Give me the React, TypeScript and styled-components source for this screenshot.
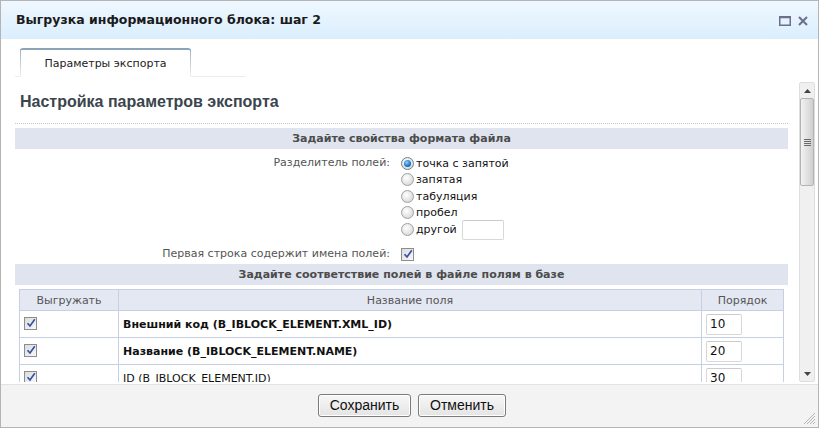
import React from "react";
import styled, { createGlobalStyle, css } from "styled-components";

const Global = createGlobalStyle`
  html, body { margin: 0; padding: 0; overflow: hidden; background: #fff; }
  * { box-sizing: border-box; }
`;

const Window = styled.div`
  width: 819px;
  height: 428px;
  border: 1px solid #b4b4b4;
  display: flex;
  flex-direction: column;
  background: #fff;
  font-family: "DejaVu Sans", Verdana, sans-serif;
`;

const TitleBar = styled.div`
  height: 38px;
  flex: none;
  display: flex;
  align-items: center;
  padding: 0 10px 0 15px;
  background: linear-gradient(#eff8ff, #dbeefd);
`;

const Title = styled.div`
  flex: 1;
  font-weight: bold;
  font-size: 12.5px;
  color: #1a1a1a;
  padding-bottom: 1px;
`;

const TitleIcons = styled.div`
  display: flex;
  gap: 7px;
  align-items: center;
  margin-top: 1px;
`;

const Body = styled.div`
  flex: 1;
  display: flex;
  flex-direction: column;
  padding: 9px 3px 2px 14px;
  min-height: 0;
`;

const TabStrip = styled.div`
  display: flex;
  padding-left: 5px;
  width: 231px;
  border-bottom: 1px solid #ececec;
  flex: none;
`;

const Tab = styled.div`
  width: 171px;
  height: 29px;
  margin-bottom: -1px;
  border-top: 2px solid #8ca2b5;
  border-radius: 3px 3px 0 0;
  background: #fff;
  display: flex;
  align-items: center;
  justify-content: center;
  font-size: 11px;
  color: #222;
  position: relative;
  padding-bottom: 1px;
  &::before, &::after {
    content: "";
    position: absolute;
    top: -1px;
    bottom: 0;
    width: 1px;
    background: linear-gradient(#9cb0c0, #f0f2f4);
  }
  &::before { left: 0; }
  &::after { right: 0; }
`;

const ScrollWrap = styled.div`
  flex: 1;
  display: flex;
  margin-top: 5px;
  min-height: 0;
`;

const Content = styled.div`
  flex: 1;
  overflow: hidden;
  padding-right: 11px;
  min-width: 0;
`;

const Heading = styled.h2`
  margin: 0;
  padding: 11px 0 0 5px;
  height: 42px;
  font-family: "Liberation Sans", Arial, sans-serif;
  font-weight: bold;
  font-size: 16px;
  color: #3a454d;
  border-bottom: 1px dotted #c6c6c6;
`;

const SectionHead = styled.div<{ $mt?: number }>`
  margin-top: ${(p) => p.$mt ?? 4}px;
  height: 21px;
  background: #e0e4ef;
  display: flex;
  align-items: center;
  justify-content: center;
  font-weight: bold;
  font-size: 11px;
  color: #4c4c4c;
`;

const FormGrid = styled.div`
  display: grid;
  grid-template-columns: 386px 1fr;
  padding-top: 6px;
  font-size: 11px;
`;

const Label = styled.div<{ $top?: number }>`
  text-align: right;
  padding-right: 11px;
  color: #555;
  padding-top: ${(p) => p.$top ?? 0}px;
  line-height: 16px;
`;

const Options = styled.div`
  display: flex;
  flex-direction: column;
`;

const Option = styled.label`
  display: flex;
  align-items: center;
  height: 16.5px;
  color: #111;
  gap: 2px;
`;

const Radio = styled.span<{ $on?: boolean }>`
  width: 13px;
  height: 13px;
  border-radius: 50%;
  border: 1px solid #a0a0a0;
  background: radial-gradient(circle at 40% 35%, #fff, #e2e2e2 60%, #cfcfcf);
  display: inline-flex;
  align-items: center;
  justify-content: center;
  flex: none;
  ${(p) =>
    p.$on &&
    css`
      border-color: #6f7f8c;
      &::after {
        content: "";
        width: 7px;
        height: 7px;
        border-radius: 50%;
        background: radial-gradient(circle at 40% 35%, #8fd0ff, #1573c4 60%, #0b4f8f);
      }
    `}
`;

const SmallInput = styled.span<{ $w: number }>`
  display: inline-block;
  width: ${(p) => p.$w}px;
  height: 20px;
  border: 1px solid #d7d7d7;
  border-top-color: #cbcbcb;
  background: #fff;
  border-radius: 2px;
  font-size: 11px;
  line-height: 18px;
  padding-left: 3px;
  color: #111;
  flex: none;
`;

const OtherRow = styled(Option)`
  height: 17px;
`;

const Check = styled.span`
  width: 13px;
  height: 13px;
  border: 1px solid #8d8d8d;
  background: linear-gradient(135deg, #dcdcdc, #f8f8f8);
  display: inline-flex;
  align-items: center;
  justify-content: center;
  flex: none;
`;

const CheckRow = styled.div`
  display: flex;
  align-items: center;
  height: 18px;
  margin-top: 7px;
`;

const Table = styled.table`
  margin: 4px 0 0 4px;
  width: 765px;
  border-collapse: collapse;
  font-size: 11px;
  table-layout: fixed;
`;

const Th = styled.th<{ $w?: number }>`
  ${(p) => p.$w && css`width: ${p.$w}px;`}
  height: 21px;
  background: #e4e8f3;
  border: 1px solid #c7cfe4;
  font-weight: normal;
  color: #555;
  padding: 0;
`;

const Td = styled.td<{ $bold?: boolean }>`
  height: 27px;
  border: 1px solid #c7cfe4;
  padding: 0 4px;
  color: #111;
  font-weight: ${(p) => (p.$bold ? "bold" : "normal")};
  white-space: nowrap;
`;

const OrderInput = styled(SmallInput)`
  width: 36px;
  height: 21px;
  font-size: 12px;
  line-height: 19px;
  vertical-align: middle;
`;

const Scrollbar = styled.div`
  width: 16px;
  flex: none;
  border: 1px solid #dedede;
  border-radius: 2px;
  background: #f0f0f0;
  display: flex;
  flex-direction: column;
  align-items: center;
  padding: 1px 0;
`;

const Arrow = styled.div`
  height: 13px;
  width: 100%;
  display: flex;
  align-items: center;
  justify-content: center;
`;

const Thumb = styled.div`
  margin-top: 1px;
  width: 14px;
  height: 88px;
  border: 1px solid #b3b3b3;
  border-radius: 2px;
  background: linear-gradient(90deg, #f2f2f2, #dedede 60%, #cfcfcf);
  display: flex;
  align-items: center;
  justify-content: center;
`;

const Track = styled.div`
  flex: 1;
`;

const Footer = styled.div`
  height: 43px;
  flex: none;
  background: #f3f3f3;
  border-top: 1px solid #e2e2e2;
  display: flex;
  align-items: center;
  justify-content: center;
  gap: 7px;
  position: relative;
  padding: 0 0 2px 5px;
`;

const Button = styled.button<{ $w: number }>`
  width: ${(p) => p.$w}px;
  height: 23px;
  font-family: "Liberation Sans", Arial, sans-serif;
  font-size: 14px;
  line-height: 16px;
  color: #111;
  border: 1px solid #7b7b7b;
  border-radius: 3px;
  background: linear-gradient(#f7f7f7, #e4e4e4);
  box-shadow: inset 0 0 0 1px #fff;
  padding: 0 0 1px;
`;

const Grip = styled.svg`
  position: absolute;
  right: 2px;
  bottom: 2px;
`;

const CheckIcon = () => (
  <svg width="10" height="10" viewBox="0 0 10 10">
    <path d="M1.5 5.2 L4 8 L8.8 1.2" fill="none" stroke="#3552a6" strokeWidth="1.7" />
  </svg>
);

const rows = [
  { name: "Внешний код (B_IBLOCK_ELEMENT.XML_ID)", bold: true, order: "10" },
  { name: "Название (B_IBLOCK_ELEMENT.NAME)", bold: true, order: "20" },
  { name: "ID (B_IBLOCK_ELEMENT.ID)", bold: false, order: "30" },
  { name: "Символьный код (B_IBLOCK_ELEMENT.CODE)", bold: false, order: "40" },
];

export default function App() {
  return (
    <>
      <Global />
      <Window>
        <TitleBar>
          <Title>Выгрузка информационного блока: шаг 2</Title>
          <TitleIcons>
            <svg width="12" height="10" viewBox="0 0 12 10">
              <rect x="0.75" y="0.75" width="10.5" height="8.5" fill="none" stroke="#6b6f8c" strokeWidth="1.5" />
              <rect x="0.75" y="0.75" width="10.5" height="1.5" fill="#6b6f8c" />
            </svg>
            <svg width="10" height="10" viewBox="0 0 10 10">
              <path d="M1 1 L9 9 M9 1 L1 9" stroke="#6b6f8c" strokeWidth="2" />
            </svg>
          </TitleIcons>
        </TitleBar>
        <Body>
          <TabStrip>
            <Tab>Параметры экспорта</Tab>
          </TabStrip>
          <ScrollWrap>
            <Content>
              <Heading>Настройка параметров экспорта</Heading>
              <SectionHead>Задайте свойства формата файла</SectionHead>
              <FormGrid>
                <Label>Разделитель полей:</Label>
                <Options>
                  <Option><Radio $on />точка с запятой</Option>
                  <Option><Radio />запятая</Option>
                  <Option><Radio />табуляция</Option>
                  <Option><Radio />пробел</Option>
                  <OtherRow><Radio />другой <SmallInput $w={42} style={{ marginLeft: 3 }} /></OtherRow>
                </Options>
                <Label $top={8}>Первая строка содержит имена полей:</Label>
                <CheckRow><Check><CheckIcon /></Check></CheckRow>
              </FormGrid>
              <SectionHead $mt={1}>Задайте соответствие полей в файле полям в базе</SectionHead>
              <Table>
                <thead>
                  <tr>
                    <Th $w={99}>Выгружать</Th>
                    <Th>Название поля</Th>
                    <Th $w={82}>Порядок</Th>
                  </tr>
                </thead>
                <tbody>
                  {rows.map((r) => (
                    <tr key={r.order}>
                      <Td><Check><CheckIcon /></Check></Td>
                      <Td $bold={r.bold}>{r.name}</Td>
                      <Td><OrderInput $w={36}>{r.order}</OrderInput></Td>
                    </tr>
                  ))}
                </tbody>
              </Table>
            </Content>
            <Scrollbar>
              <Arrow>
                <svg width="7" height="4" viewBox="0 0 7 4"><path d="M3.5 0 L7 4 L0 4 Z" fill="#444" /></svg>
              </Arrow>
              <Thumb>
                <svg width="7" height="7" viewBox="0 0 7 7">
                  <path d="M0 0.5 H7 M0 2.5 H7 M0 4.5 H7 M0 6.5 H7" stroke="#6a6a6a" strokeWidth="1" />
                </svg>
              </Thumb>
              <Track />
              <Arrow>
                <svg width="7" height="4" viewBox="0 0 7 4"><path d="M0 0 L7 0 L3.5 4 Z" fill="#444" /></svg>
              </Arrow>
            </Scrollbar>
          </ScrollWrap>
        </Body>
        <Footer>
          <Button $w={93}>Сохранить</Button>
          <Button $w={88}>Отменить</Button>
          <Grip width="14" height="14" viewBox="0 0 14 14">
            <path d="M13 2 L2 13 M13 5 L5 13 M13 8 L8 13 M13 11 L11 13" stroke="#b5b5b5" strokeWidth="1" />
          </Grip>
        </Footer>
      </Window>
    </>
  );
}
